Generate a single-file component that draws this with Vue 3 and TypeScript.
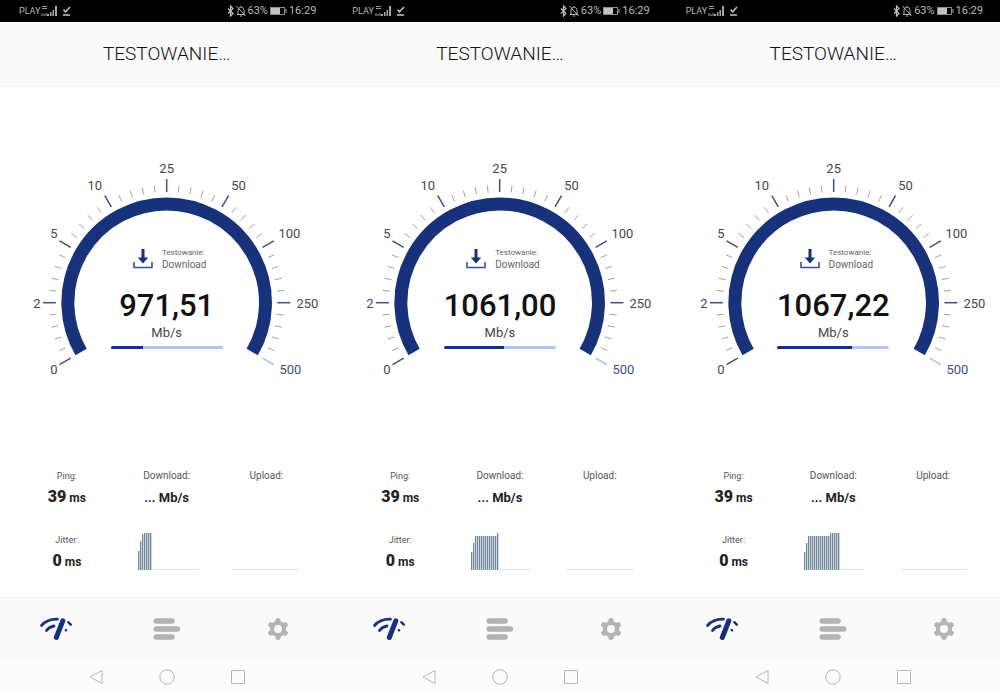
<script setup lang="ts">
interface Phone {
  speed: string
  progress: number
  bars: number[]
}

interface Tick {
  x1: number
  y1: number
  x2: number
  y2: number
  kind: string
}

const phones: Phone[] = [
  { speed: '971,51', progress: 29, bars: [19, 29, 36, 37, 37, 37, 37] },
  { speed: '1061,00', progress: 54, bars: [18, 27, ...Array(11).fill(34), 37] },
  { speed: '1067,22', progress: 67, bars: [18, 27, ...Array(11).fill(34), 37, 37, 37, 37, 37] },
]

const cx = 167
const cy = 153

function point(angle: number, radius: number) {
  const rad = (angle * Math.PI) / 180
  return { x: cx + radius * Math.sin(rad), y: cy - radius * Math.cos(rad) }
}

const ticks: Tick[] = []
for (let i = 0; i <= 40; i++) {
  const major = i % 5 === 0
  const angle = -120 + i * 6
  const a = point(angle, 111)
  const b = point(angle, major ? 124 : 118)
  const kind = i === 40 ? 'last' : major ? 'major' : 'minor'
  ticks.push({ x1: a.x, y1: a.y, x2: b.x, y2: b.y, kind })
}

const start = point(-120, 99)
const end = point(120, 99)
const arc = `M${start.x} ${start.y}A99 99 0 1 1 ${end.x} ${end.y}`

const scale = [
  { text: '0', x: 54, y: 224 },
  { text: '2', x: 37, y: 158 },
  { text: '5', x: 54, y: 88 },
  { text: '10', x: 95, y: 40 },
  { text: '25', x: 167, y: 23 },
  { text: '50', x: 239, y: 40 },
  { text: '100', x: 290, y: 88 },
  { text: '250', x: 308, y: 158 },
  { text: '500', x: 291, y: 224 },
]

const teeth = [0, 60, 120, 180, 240, 300]
</script>

<template>
  <div class="board">
    <section v-for="phone in phones" :key="phone.speed" class="phone">
      <div class="status">
        <div class="status-side">
          <span class="carrier">PLAY</span>
          <svg class="signal" width="17" height="12" viewBox="0 0 17 12" aria-hidden="true">
            <path d="M1 1.500h5M1 3.500h5M1 8v3M3 9v2M5 8v3" fill="none" stroke="#9c9c9c" />
            <path d="M6 9h2v2H6zM9 7h1.500v4H9zM11.500 5H13v6h-1.500zM14 1h2v10h-2z" fill="#a8a8a8" />
          </svg>
          <svg width="9" height="12" viewBox="0 0 9 12" aria-hidden="true">
            <path d="M1.500 4.500l2 2.300L8 2M1 10h7" fill="none" stroke="#c4c4c4" stroke-width="1.500" />
          </svg>
        </div>
        <div class="status-side right">
          <svg width="7" height="12" viewBox="0 0 7 12" aria-hidden="true">
            <path d="M1 3.500l5 5L3.500 11V1L6 3.500l-5 5" fill="none" stroke="#c0c0c0" stroke-width="1.200" />
          </svg>
          <svg width="10" height="12" viewBox="0 0 10 12" aria-hidden="true">
            <path d="M2 9V5.500C2 3.500 3.500 2 5 2s3 1.500 3 3.500V9M1 9.500h8M4 11h2M5 1v1M.5 1l9 10" fill="none" stroke="#b5b5b5" />
          </svg>
          <span>63%</span>
          <svg class="battery" width="17" height="8" viewBox="0 0 17 8" aria-hidden="true">
            <rect x=".5" y=".5" width="14" height="7" fill="none" stroke="#8c8c8c" />
            <path d="M1 1h9v6H1z" fill="#c2c2c2" />
            <path d="M16 2v4" stroke="#a8a8a8" />
          </svg>
          <span>16:29</span>
        </div>
      </div>

      <header class="header"><h1>TESTOWANIE…</h1></header>

      <main class="content">
        <div class="gauge">
          <svg class="dial" viewBox="0 0 334 240" aria-hidden="true">
            <path :d="arc" fill="none" stroke="#17317a" stroke-width="13" />
            <line
              v-for="(t, i) in ticks"
              :key="i"
              :x1="t.x1"
              :y1="t.y1"
              :x2="t.x2"
              :y2="t.y2"
              :class="t.kind"
            />
            <text
              v-for="s in scale"
              :key="s.text"
              :x="s.x"
              :y="s.y"
              :class="['mark', { final: s.text === '500' }]"
            >{{ s.text }}</text>
          </svg>
          <div class="reading">
            <div class="phase">
              <svg width="20" height="20" viewBox="0 0 20 20" aria-hidden="true">
                <path d="M8.500 0h3v8.500h3.700L10 14.500 4.800 8.500h3.700z" fill="#17317a" />
                <path d="M1 13v5.500h18V13" fill="none" stroke="#3c5295" stroke-width="1.600" />
              </svg>
              <div class="phase-text">
                <span class="phase-label">Testowanie:</span>
                <span class="phase-name">Download</span>
              </div>
            </div>
            <div class="speed">{{ phone.speed }}</div>
            <div class="unit">Mb/s</div>
            <div class="progress" role="progressbar" :aria-valuenow="phone.progress">
              <div class="progress-fill" :style="{ width: phone.progress + '%' }"></div>
            </div>
          </div>
        </div>

        <div class="stats">
          <div class="stat">
            <div class="label">Ping:</div>
            <div class="value"><b>39</b> ms</div>
          </div>
          <div class="stat">
            <div class="label wide">Download:</div>
            <div class="value pending">... Mb/s</div>
          </div>
          <div class="stat">
            <div class="label wide">Upload:</div>
          </div>
          <div class="stat">
            <div class="label">Jitter:</div>
            <div class="value"><b>0</b> ms</div>
          </div>
          <div class="chart filled">
            <svg width="60" height="38" viewBox="0 0 60 38" aria-hidden="true">
              <path d="M0 37.500h60" stroke="#dde2e4" />
              <template v-for="(h, i) in phone.bars" :key="i">
                <rect :x="i * 2" :y="38 - h" width="2" :height="h" fill="#cdd7dc" />
                <rect :x="i * 2" :y="38 - h" width="1" :height="h" fill="#71869a" />
              </template>
            </svg>
          </div>
          <div class="chart">
            <svg width="66" height="38" viewBox="0 0 66 38" aria-hidden="true">
              <path d="M0 37.500h66" stroke="#dde2e4" />
            </svg>
          </div>
        </div>
      </main>

      <nav class="tabs">
        <button type="button" aria-label="Test">
          <svg width="34" height="24" viewBox="0 0 34 24" fill="none" stroke="#17317a" stroke-linecap="round" aria-hidden="true">
            <path d="M2.500 8.500C6.500 4 12 2 18.500 2.200" stroke-width="2.800" />
            <path d="M7.500 13.500C9.300 11 11.800 9.500 15 9" stroke-width="2.800" />
            <path d="M23.800 3.800L17.300 20.500" stroke-width="5" />
            <path d="M29.300 5.200l2.500 2.500M26.800 13l.3.300" stroke-width="2.400" />
          </svg>
        </button>
        <button type="button" aria-label="Wyniki">
          <svg width="28" height="24" viewBox="0 0 28 24" fill="none" stroke="#b3b3b3" stroke-width="5.600" stroke-linecap="round" aria-hidden="true">
            <path d="M3.300 4H19M3.300 12H24.500M3.300 20H19" />
          </svg>
        </button>
        <button type="button" aria-label="Ustawienia">
          <svg width="24" height="24" viewBox="-12 -12 24 24" aria-hidden="true">
            <circle r="6" fill="none" stroke="#b3b3b3" stroke-width="4" />
            <path
              v-for="a in teeth"
              :key="a"
              d="M-2.800 -7L-2.200 -10.300Q0 -11.500 2.200 -10.300L2.800 -7z"
              :transform="`rotate(${a})`"
              fill="#b3b3b3"
            />
          </svg>
        </button>
      </nav>

      <nav class="system">
        <button type="button" aria-label="Wstecz">
          <svg width="16" height="16" viewBox="0 0 16 16" aria-hidden="true">
            <path d="M14 1.500v13L2 8z" fill="none" stroke="#b5b5b5" stroke-linejoin="round" />
          </svg>
        </button>
        <button type="button" aria-label="Ekran główny">
          <svg width="16" height="16" viewBox="0 0 16 16" aria-hidden="true">
            <circle cx="8" cy="8" r="7.200" fill="none" stroke="#b5b5b5" />
          </svg>
        </button>
        <button type="button" aria-label="Ostatnie">
          <svg width="16" height="16" viewBox="0 0 16 16" aria-hidden="true">
            <rect x="1.500" y="1.500" width="13" height="13" rx=".5" fill="none" stroke="#b5b5b5" />
          </svg>
        </button>
      </nav>
    </section>
  </div>
</template>

<style>
body {
  margin: 0;
  background: #fff;
}
</style>

<style scoped>
.board {
  display: grid;
  grid-template-columns: repeat(3, 1fr);
  min-height: 100vh;
  font-family: Roboto, "Open Sans", sans-serif;
  color: #222;
}
.phone {
  display: flex;
  flex-direction: column;
  min-width: 0;
}
.status {
  display: flex;
  align-items: center;
  justify-content: space-between;
  height: 22px;
  padding: 0 17px 0 19px;
  background: #000;
  color: #b8b8b8;
  font-size: 11px;
  line-height: 24px;
}
.status-side {
  display: flex;
  align-items: center;
  gap: 4px;
}
.carrier {
  font-size: 9px;
}
.signal {
  margin-left: -3px;
}
.right {
  gap: 2px;
}
.header {
  display: flex;
  align-items: center;
  justify-content: center;
  height: 63px;
  background: #fafafa;
  border-bottom: 1px solid #f1f1f1;
}
h1 {
  margin: 0;
  font-size: 19px;
  font-weight: 300;
  line-height: 24px;
  color: #111;
}
.content {
  flex: 1;
  padding-top: 64px;
}
.gauge {
  display: grid;
  justify-items: center;
}
.dial,
.reading {
  grid-area: 1 / 1;
}
.dial {
  display: block;
  width: 100%;
  max-width: 334px;
}
.major {
  stroke: #3c5088;
  stroke-width: 1.5px;
}
.minor {
  stroke: #9aa3ad;
  stroke-width: 1px;
}
.last {
  stroke: #a9bce8;
  stroke-width: 1.5px;
}
.mark {
  font-size: 13px;
  text-anchor: middle;
  fill: #484848;
}
.final {
  fill: #3a508c;
}
.reading {
  display: flex;
  flex-direction: column;
  align-items: center;
  padding-top: 97px;
}
.phase {
  display: flex;
  align-items: center;
  gap: 9px;
  height: 24px;
  padding-left: 6px;
}
.phase-text {
  display: flex;
  flex-direction: column;
  line-height: 12px;
  color: #666;
}
.phase-label {
  font-size: 8px;
}
.phase-name {
  font-size: 10px;
}
.speed {
  margin-top: 17px;
  font-size: 31px;
  font-weight: 500;
  line-height: 36px;
  color: #111;
}
.unit {
  font-size: 13px;
  line-height: 18px;
  color: #444;
}
.progress {
  width: 112px;
  height: 3px;
  margin-top: 4px;
  border-radius: 2px;
  background: #b5c5f5;
  overflow: hidden;
}
.progress-fill {
  height: 100%;
  background: #17317a;
}
.stats {
  display: grid;
  grid-template-columns: repeat(3, 1fr);
  row-gap: 20px;
  padding: 78px 17px 0;
}
.stat {
  height: 44px;
  text-align: center;
}
.label {
  font-size: 9px;
  line-height: 16px;
  color: #555;
}
.wide {
  font-size: 10px;
}
.value {
  margin-top: 2px;
  font-size: 12px;
  font-weight: 700;
  line-height: 22px;
}
.value b {
  font-size: 16px;
}
.pending {
  margin-top: 3px;
  font-size: 13px;
}
.chart {
  display: flex;
  justify-content: center;
}
.filled {
  padding-left: 2px;
}
.tabs {
  display: grid;
  grid-template-columns: repeat(3, 1fr);
  height: 62px;
  border-top: 1px solid #f1f1f1;
  background: #fafafa;
}
button {
  display: flex;
  align-items: center;
  justify-content: center;
  padding: 0;
  border: 0;
  background: none;
}
.system {
  display: flex;
  align-items: center;
  justify-content: center;
  gap: 55px;
  height: 33px;
  background: #fcfcfc;
}
</style>
